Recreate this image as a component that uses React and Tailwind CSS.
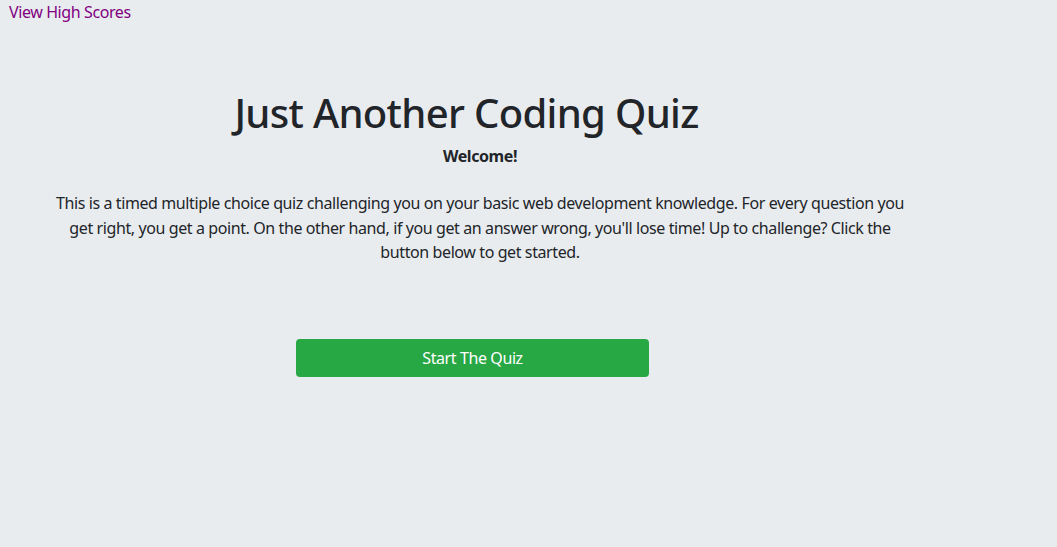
export default function App() {
  return (
    <div className="min-h-[547px] bg-[#e9ecef] text-[#212529] font-['Noto_Sans',sans-serif] text-base tracking-[-0.4px]">
      <a href="#" className="block pl-[9px] leading-6 text-[#800080]">View High Scores</a>

      <div className="w-[960px]">
        <h1 className="mt-[65px] w-[933px] text-center text-[40px] leading-[48px] font-medium tracking-[-0.67px]">
          Just Another Coding Quiz
        </h1>
        <p className="mt-[7px] text-center font-bold leading-6">Welcome!</p>
        <p className="mt-[23px] text-center leading-[24.5px]">
          This is a timed multiple choice quiz challenging you on your basic web development knowledge. For every question you
          <br />
          get right, you get a point. On the other hand, if you get an answer wrong, you'll lose time! Up to challenge? Click the
          <br />
          button below to get started.
        </p>
        <button className="mt-[74px] ml-[296px] w-[353px] h-[38px] rounded-[4px] bg-[#28a745] text-white leading-6">
          Start The Quiz
        </button>
      </div>
    </div>
  );
}
